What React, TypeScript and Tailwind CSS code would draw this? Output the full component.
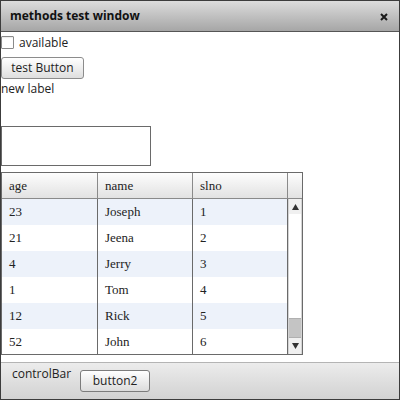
import React from "react";

const rows = [
  { age: "23", name: "Joseph", slno: "1" },
  { age: "21", name: "Jeena", slno: "2" },
  { age: "4", name: "Jerry", slno: "3" },
  { age: "1", name: "Tom", slno: "4" },
  { age: "12", name: "Rick", slno: "5" },
  { age: "52", name: "John", slno: "6" },
];

const cols = ["age", "name", "slno"];
const widths = ["w-[96px]", "w-[95px]", "w-[95px]"];

const App = () => {
  return (
    <div className="w-[400px] h-[400px] border border-[#3c3c3c] bg-white flex flex-col font-['Open_Sans',sans-serif] text-[12px] text-[#222]">
      <div className="h-[31px] shrink-0 border-b border-[#555] bg-gradient-to-b from-[#dcdcdc] to-[#a6a6a6] flex items-center justify-between pl-[9px] pr-[11px]">
        <span className="font-bold text-[12px] text-[#111]">methods test window</span>
        <svg width="8" height="8" viewBox="0 0 8 8" className="mt-[1px]">
          <path d="M1 1 L7 7 M7 1 L1 7" stroke="#1a1a1a" strokeWidth="2" />
        </svg>
      </div>

      <div className="flex-1 flex flex-col items-start">
        <label className="mt-[3px] h-[15px] flex items-center gap-[5px]">
          <span className="w-[13px] h-[13px] border border-[#8a8a8a] bg-white rounded-[1px] shadow-[inset_0_1px_1px_rgba(0,0,0,0.08)]" />
          <span className="leading-[15px]">available</span>
        </label>

        <button className="mt-[7px] w-[83px] h-[22px] border border-[#8c8c8c] rounded-[3px] bg-gradient-to-b from-[#ffffff] to-[#dedede] text-[12px] leading-none">
          test Button
        </button>

        <div className="mt-[2px] leading-[16px]">new label</div>

        <div className="mt-[29px] w-[150px] h-[40px] border border-[#6a6a6a] bg-white" />

        <div className="mt-[6px] w-[302px] h-[183px] border border-[#6a6a6a] flex flex-col font-['Liberation_Serif',serif] text-[13px] text-[#222] overflow-hidden">
          <div className="h-[26px] shrink-0 flex border-b border-[#8a8a8a] bg-gradient-to-b from-[#fdfdfd] to-[#e2e2e2]">
            {cols.map((c, i) => (
              <div key={c} className={`${widths[i]} border-r border-[#8a8a8a] pl-[7px] flex items-center`}>
                {c}
              </div>
            ))}
            <div className="w-[14px]" />
          </div>
          <div className="flex-1 flex overflow-hidden">
            <div className="flex flex-col">
              {rows.map((r, idx) => (
                <div
                  key={r.slno}
                  className={`h-[26px] shrink-0 flex ${idx % 2 === 0 ? "bg-[#edf2fa]" : "bg-white"}`}
                >
                  <div className="w-[96px] border-r border-[#6a6a6a] pl-[7px] flex items-center">{r.age}</div>
                  <div className="w-[95px] border-r border-[#6a6a6a] pl-[7px] flex items-center">{r.name}</div>
                  <div className="w-[95px] border-r border-[#6a6a6a] pl-[7px] flex items-center">{r.slno}</div>
                </div>
              ))}
            </div>
            <div className="w-[14px] flex flex-col bg-white border-x border-[#d4d4d4]">
              <div className="h-[15px] flex items-center justify-center bg-[#f0f0f0]">
                <svg width="7" height="6" viewBox="0 0 7 6">
                  <path d="M3.5 0 L7 6 L0 6 Z" fill="#333" />
                </svg>
              </div>
              <div className="flex-1" />
              <div className="h-[20px] bg-[#c4c4c4] border-y border-[#b0b0b0]" />
              <div className="h-[16px] flex items-center justify-center bg-[#f0f0f0]">
                <svg width="7" height="6" viewBox="0 0 7 6">
                  <path d="M0 0 L7 0 L3.5 6 Z" fill="#333" />
                </svg>
              </div>
            </div>
          </div>
        </div>
      </div>

      <div className="h-[37px] shrink-0 border-t border-[#b4b4b4] bg-gradient-to-b from-[#ececec] to-[#d2d2d2] flex items-start pl-[11px] pt-[3px] gap-[9px]">
        <span className="leading-[16px]">controlBar</span>
        <button className="mt-[4px] w-[70px] h-[22px] border border-[#7c7c7c] rounded-[3px] bg-gradient-to-b from-[#ffffff] to-[#dcdcdc] text-[12px] leading-none">
          button2
        </button>
      </div>
    </div>
  );
};

export default App;
